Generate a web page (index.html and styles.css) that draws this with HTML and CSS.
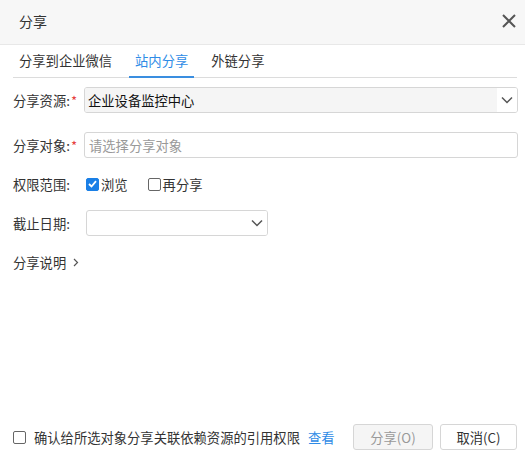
FILE: index.html
```html
<!DOCTYPE html>
<html>
<head>
<meta charset="utf-8">
<link rel="stylesheet" href="styles.css">
</head>
<body>
<div class="dialog">
  <div class="header">
    <span class="title">分享</span>
    <svg class="close" width="14" height="14" viewBox="0 0 14 14"><path d="M1 1L13 13M13 1L1 13" stroke="#555" stroke-width="2" fill="none"/></svg>
  </div>
  <div class="tabs">
    <div class="tab">分享到企业微信</div>
    <div class="tab active">站内分享</div>
    <div class="tab">外链分享</div>
  </div>
  <div class="form">
    <div class="row row-first">
      <div class="label">分享资源:<span class="req">*</span></div>
      <div class="select grey wide">
        <span class="value">企业设备监控中心</span>
        <span class="arrow"><svg width="12" height="8" viewBox="0 0 12 8"><path d="M1 1.5L6 6.5L11 1.5" stroke="#555" stroke-width="1.5" fill="none"/></svg></span>
      </div>
    </div>
    <div class="row">
      <div class="label">分享对象:<span class="req">*</span></div>
      <div class="input wide"><span class="placeholder">请选择分享对象</span></div>
    </div>
    <div class="row">
      <div class="label label2">权限范围:</div>
      <label class="check"><span class="box checked"><svg width="9" height="8" viewBox="0 0 9 8"><path d="M1 4L3.5 6.5L8 1.2" stroke="#fff" stroke-width="1.8" fill="none"/></svg></span>浏览</label>
      <label class="check second"><span class="box"></span>再分享</label>
    </div>
    <div class="row">
      <div class="label label2">截止日期:</div>
      <div class="select date">
        <span class="value"></span>
        <span class="arrow"><svg width="12" height="8" viewBox="0 0 12 8"><path d="M1 1.5L6 6.5L11 1.5" stroke="#555" stroke-width="1.5" fill="none"/></svg></span>
      </div>
    </div>
    <div class="row">
      <div class="more">分享说明<svg width="6" height="9" viewBox="0 0 6 9"><path d="M1 1L4.5 4.5L1 8" stroke="#555" stroke-width="1.2" fill="none"/></svg></div>
    </div>
  </div>
  <div class="footer">
    <label class="check confirm"><span class="box"></span>确认给所选对象分享关联依赖资源的引用权限</label>
    <a class="link">查看</a>
    <div class="buttons">
      <button class="btn disabled">分享(O)</button>
      <button class="btn">取消(C)</button>
    </div>
  </div>
</div>
</body>
</html>
```
FILE: styles.css
```css
* { box-sizing: border-box; }
html, body { margin: 0; padding: 0; background: #fff; }
body {
  font-family: "Noto Sans CJK SC", "Liberation Sans", sans-serif;
  font-size: 13.3px;
  color: #333;
}
.dialog {
  width: 525px;
  height: 457px;
  display: flex;
  flex-direction: column;
}
.header {
  height: 45px;
  background: #f7f7f7;
  border-bottom: 1px solid #e8e8e8;
  display: flex;
  align-items: center;
  justify-content: space-between;
  padding: 0 9px 2px 19px;
}
.title { font-size: 14px; color: #333; }
.close { display: block; }
.tabs {
  display: flex;
  gap: 11px;
  margin: 0 8px 0 13px;
  border-bottom: 1px solid #dcdcdc;
}
.tab {
  padding: 6px 6px 5px;
  line-height: 20px;
  border-bottom: 2px solid transparent;
  margin-bottom: -1px;
  color: #333;
}
.tab.active {
  color: #2e8be6;
  border-bottom-color: #3a8ee0;
}
.form {
  padding: 9px 7px 0 13px;
  display: flex;
  flex-direction: column;
}
.row {
  display: flex;
  align-items: center;
  height: 26px;
  margin-bottom: 13px;
}
.row-first { margin-bottom: 19px; }
.label {
  width: 71px;
  flex: none;
  color: #333;
}
.label2 { width: 73px; }
.req { color: #e63c3c; margin-left: 1px; }
.select, .input {
  height: 26px;
  border: 1px solid #d6d6d6;
  border-radius: 3px;
  display: flex;
  align-items: center;
  background: #fff;
  overflow: hidden;
}
.wide { flex: 1; }
.select .value {
  flex: 1;
  height: 100%;
  display: flex;
  align-items: center;
  padding-left: 3px;
  color: #111;
}
.select.grey .value { background: #f5f5f5; }
.select .arrow {
  width: 20px;
  height: 100%;
  display: flex;
  align-items: center;
  justify-content: center;
  background: #fff;
}
.input .placeholder { padding-left: 4px; color: #999; }
.date { width: 182px; }
.check {
  display: flex;
  align-items: center;
  color: #333;
}
.check.second { margin-left: 20px; }
.box {
  width: 13px;
  height: 13px;
  border: 1px solid #666;
  border-radius: 2px;
  margin-right: 2px;
  display: flex;
  align-items: center;
  justify-content: center;
}
.box.checked {
  background: #1a7fe6;
  border-color: #1a7fe6;
}
.more {
  display: flex;
  align-items: center;
  gap: 7px;
}
.footer {
  margin-top: auto;
  padding: 0 8px 7px 13px;
  display: flex;
  align-items: center;
  height: 33px;
}
.confirm .box { margin-right: 8px; }
.link { color: #2e8be6; margin-left: 8px; }
.buttons {
  margin-left: auto;
  display: flex;
  gap: 7px;
}
.btn {
  height: 26px;
  border: 1px solid #d6d6d6;
  border-radius: 3px;
  background: #fff;
  font-family: inherit;
  font-size: 13.3px;
  color: #333;
  padding: 0;
  width: 77px;
}
.btn.disabled {
  width: 80px;
  background: #f5f5f5;
  color: #999;
}
```
